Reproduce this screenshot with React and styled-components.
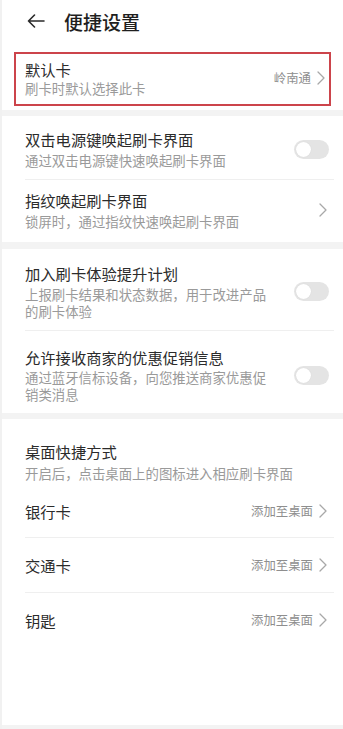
import React from "react";
import styled, { createGlobalStyle } from "styled-components";

const Global = createGlobalStyle`
  html, body { margin: 0; padding: 0; background: #ffffff; }
  body { font-family: "Noto Sans CJK SC", "Noto Sans", sans-serif; }
  * { box-sizing: border-box; }
`;

const Page = styled.div`
  width: 343px;
  min-height: 729px;
  background: #ffffff;
  border-left: 2px solid #f1f1f1;
  display: flex;
  flex-direction: column;
`;

const Header = styled.div`
  height: 44px;
  display: flex;
  align-items: center;
  padding-left: 25px;
`;

const BackButton = styled.div`
  width: 18px;
  height: 14px;
  display: flex;
  align-items: center;
  margin-top: -3px;
  margin-right: 19px;
`;

const Title = styled.h1`
  margin: 0;
  font-size: 19px;
  font-weight: 500;
  color: #1f1f1f;
  line-height: 24px;
`;

const Section = styled.div`
  background: #ffffff;
  padding: ${(p) => p.$pad || "0"};
  display: flex;
  flex-direction: column;
`;

const Band = styled.div`
  height: ${(p) => p.$h || 6}px;
  background: #f3f3f3;
`;

const Row = styled.div`
  display: flex;
  align-items: center;
  justify-content: space-between;
  border-bottom: ${(p) => (p.$divider ? "1px solid #efefef" : "none")};
  padding: ${(p) => p.$pad || "13px 0 10px"};
`;

const Highlighted = styled(Row)`
  margin: 8px 12px 0 12px;
  border: 2px solid #cc444b;
  padding: 5px 3px 7px 9px;
`;

const TextCol = styled.div`
  display: flex;
  flex-direction: column;
  flex: 1;
  min-width: 0;
  padding-right: ${(p) => p.$pr || 0}px;
`;

const ItemTitle = styled.div`
  font-size: 15.3px;
  line-height: 20px;
  color: #2b2b2b;
`;

const ItemSub = styled.div`
  font-size: 13.4px;
  line-height: 17px;
  color: #9a9a9a;
  margin-top: ${(p) => p.$mt ?? 3}px;
`;

const Trail = styled.div`
  display: flex;
  align-items: center;
  gap: 6px;
  margin-right: ${(p) => p.$mr ?? 7}px;
`;

const Value = styled.span`
  font-size: 12.4px;
  color: #8e8e8e;
  line-height: 16px;
`;

const Toggle = styled.div`
  width: 35px;
  height: 19px;
  border-radius: 10px;
  background: #e4e4e4;
  position: relative;
  margin-right: 5px;
  flex-shrink: 0;
  &::after {
    content: "";
    position: absolute;
    left: 2px;
    top: 2px;
    width: 15px;
    height: 15px;
    border-radius: 50%;
    background: #ffffff;
    box-shadow: 0 0 1px rgba(0, 0, 0, 0.12);
  }
`;

const Chevron = () => (
  <svg width="8" height="14" viewBox="0 0 8 14" fill="none">
    <path d="M1 1 L7 7 L1 13" stroke="#a8a8a8" strokeWidth="1.3" strokeLinecap="round" strokeLinejoin="round" />
  </svg>
);

const BackArrow = () => (
  <svg width="18" height="14" viewBox="0 0 18 14" fill="none">
    <path d="M17 7 H1.5 M7.5 1 L1.5 7 L7.5 13" stroke="#2a2a2a" strokeWidth="1.6" strokeLinecap="round" strokeLinejoin="round" />
  </svg>
);

const ShortcutRow = styled(Row)`
  padding: 0;
  height: ${(p) => p.$h || 55}px;
`;

const ShortcutLabel = styled.div`
  font-size: 15.3px;
  color: #2b2b2b;
  line-height: 20px;
`;

const Spacer = styled.div`
  flex: 1;
  background: #ffffff;
`;

export default function App() {
  return (
    <>
      <Global />
      <Page>
        <Header>
          <BackButton>
            <BackArrow />
          </BackButton>
          <Title>便捷设置</Title>
        </Header>

        <Section $pad="0 0 4px 0">
          <Highlighted>
            <TextCol>
              <ItemTitle>默认卡</ItemTitle>
              <ItemSub $mt={1}>刷卡时默认选择此卡</ItemSub>
            </TextCol>
            <Trail $mr={1}>
              <Value>岭南通</Value>
              <Chevron />
            </Trail>
          </Highlighted>
        </Section>

        <Band $h={6} />

        <Section $pad="0 9px 0 23px">
          <Row $divider>
            <TextCol>
              <ItemTitle>双击电源键唤起刷卡界面</ItemTitle>
              <ItemSub>通过双击电源键快速唤起刷卡界面</ItemSub>
            </TextCol>
            <Toggle />
          </Row>
          <Row $pad="10px 0 12px">
            <TextCol>
              <ItemTitle>指纹唤起刷卡界面</ItemTitle>
              <ItemSub>锁屏时，通过指纹快速唤起刷卡界面</ItemSub>
            </TextCol>
            <Trail>
              <Chevron />
            </Trail>
          </Row>
        </Section>

        <Band $h={7} />

        <Section $pad="0 9px 0 23px">
          <Row $divider $pad="14px 0 10px">
            <TextCol $pr={16}>
              <ItemTitle>加入刷卡体验提升计划</ItemTitle>
              <ItemSub>上报刷卡结果和状态数据，用于改进产品的刷卡体验</ItemSub>
            </TextCol>
            <Toggle />
          </Row>
          <Row $pad="16px 0 10px">
            <TextCol $pr={16}>
              <ItemTitle>允许接收商家的优惠促销信息</ItemTitle>
              <ItemSub $mt={2}>通过蓝牙信标设备，向您推送商家优惠促销类消息</ItemSub>
            </TextCol>
            <Toggle />
          </Row>
        </Section>

        <Band $h={6} />

        <Section $pad="0 9px 0 23px">
          <Row $pad="22px 0 2px">
            <TextCol>
              <ItemTitle>桌面快捷方式</ItemTitle>
              <ItemSub $mt={4}>开启后，点击桌面上的图标进入相应刷卡界面</ItemSub>
            </TextCol>
          </Row>
          <ShortcutRow $divider $h={54}>
            <ShortcutLabel>银行卡</ShortcutLabel>
            <Trail>
              <Value>添加至桌面</Value>
              <Chevron />
            </Trail>
          </ShortcutRow>
          <ShortcutRow $divider $h={55}>
            <ShortcutLabel>交通卡</ShortcutLabel>
            <Trail>
              <Value>添加至桌面</Value>
              <Chevron />
            </Trail>
          </ShortcutRow>
          <ShortcutRow $h={54}>
            <ShortcutLabel>钥匙</ShortcutLabel>
            <Trail>
              <Value>添加至桌面</Value>
              <Chevron />
            </Trail>
          </ShortcutRow>
        </Section>
        <Spacer />
        <Band $h={4} />
      </Page>
    </>
  );
}
